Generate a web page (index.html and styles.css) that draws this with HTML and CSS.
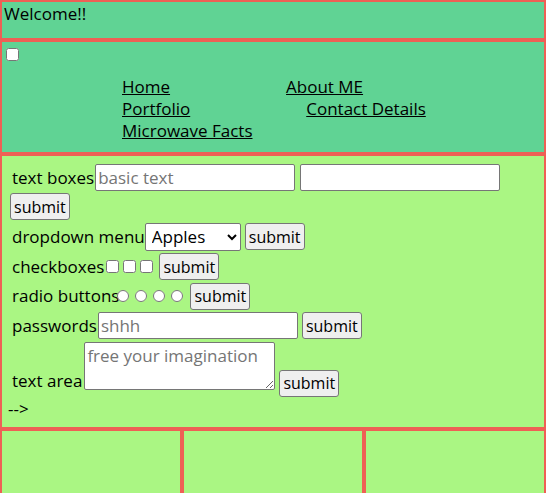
FILE: index.html
```html
<!DOCTYPE html>
<html lang="en">
<head>
<meta charset="utf-8">
<title>Welcome</title>
<link rel="stylesheet" href="styles.css">
</head>
<body>
<div class="page">
  <header class="header">Welcome!!</header>
  <nav class="nav">
    <input type="checkbox" class="menu-toggle">
    <ul class="links">
      <li><a href="#">Home</a></li>
      <li><a href="#">About ME</a></li>
      <li><a href="#">Portfolio</a></li>
      <li><a href="#">Contact Details</a></li>
      <li><a href="#">Microwave Facts</a></li>
    </ul>
  </nav>
  <main class="main">
    <form class="form">
      <div class="row row-wrap">
        <label class="lbl lbl-tight">text boxes</label>
        <input type="text" class="field" placeholder="basic text">
        <input type="text" class="field">
        <button type="button" class="btn">submit</button>
      </div>
      <div class="row">
        <label class="lbl lbl-select">dropdown menu</label>
        <select class="select"><option>Apples</option><option>Oranges</option></select>
        <button type="button" class="btn">submit</button>
      </div>
      <div class="row">
        <label class="lbl lbl-none">checkboxes</label>
        <span class="choices choices-check">
          <input type="checkbox"><input type="checkbox"><input type="checkbox">
        </span>
        <button type="button" class="btn">submit</button>
      </div>
      <div class="row">
        <label class="lbl lbl-none">radio buttons</label>
        <span class="choices choices-radio">
          <input type="radio" name="r"><input type="radio" name="r"><input type="radio" name="r"><input type="radio" name="r">
        </span>
        <button type="button" class="btn">submit</button>
      </div>
      <div class="row">
        <label class="lbl lbl-tight">passwords</label>
        <input type="password" class="field" placeholder="shhh">
        <button type="button" class="btn">submit</button>
      </div>
      <div class="row row-area">
        <label class="lbl lbl-area">text area</label>
        <textarea class="area" placeholder="free your imagination"></textarea>
        <button type="button" class="btn btn-area">submit</button>
      </div>
    </form>
    <div class="stray">--&gt;</div>
  </main>
  <footer class="footer">
    <div class="cell"></div>
    <div class="cell"></div>
    <div class="cell"></div>
  </footer>
</div>
</body>
</html>
```

FILE: styles.css
```css
* { box-sizing: border-box; }

html, body {
  margin: 0;
  padding: 0;
}

body {
  font-family: "Open Sans", "DejaVu Sans", sans-serif;
  font-size: 17px;
  line-height: 22px;
  color: #000;
  background: #fff;
}

.page {
  display: grid;
  grid-template-columns: repeat(3, 1fr);
  grid-template-rows: 40px 114px 275px 120px;
}

.header, .nav, .main {
  grid-column: 1 / -1;
}

.header, .nav, .main, .cell {
  border: 2px solid #ee6055;
}

.header {
  background: #60d394;
  padding: 1px 2px;
}

.nav {
  background: #60d394;
  padding-top: 3px;
}

.menu-toggle {
  display: block;
  margin: 3px 3px 3px 4px;
  width: 13px;
  height: 13px;
}

.links {
  list-style: none;
  margin: 15px 0 0 0;
  padding: 0 0 0 120px;
  width: 500px;
  display: flex;
  flex-wrap: wrap;
  column-gap: 116px;
}

.links a {
  color: #000;
  text-decoration: underline;
}

.main {
  background: #aaf683;
  padding: 8px 6px 0 6px;
}

.form {
  display: flex;
  flex-direction: column;
  gap: 2.5px;
  padding-left: 2px;
}

.row {
  display: flex;
  align-items: center;
  column-gap: 4px;
}

.row-wrap {
  flex-wrap: wrap;
  column-gap: 5px;
  row-gap: 2px;
}

.lbl {
  white-space: nowrap;
  padding-left: 2px;
}

.lbl-tight { margin-right: -3px; }
.row-wrap .lbl-tight { margin-right: -4px; }
.lbl-select { margin-right: -4px; }
.lbl-none { margin-right: -4px; }

.field {
  font: inherit;
  width: 200px;
  height: 27px;
  padding: 1px 2px;
  border: 1px solid #767676;
  border-radius: 2px;
  background: #fff;
}

.field::placeholder,
.area::placeholder {
  color: #757575;
}

.select {
  font: inherit;
  width: 96px;
  height: 28px;
  padding: 0 0 0 2px;
  border: 1px solid #767676;
  border-radius: 2px;
  background: #fff;
  color: #000;
}

.btn {
  font: inherit;
  font-size: 16px;
  height: 27px;
  padding: 0 3px;
  border: 1px solid #767676;
  border-radius: 3px;
  background: #efefef;
  color: #000;
}

.choices {
  display: flex;
  align-items: center;
}

.choices input {
  margin: 0;
  width: 13px;
  height: 13px;
}

.choices-check {
  gap: 4px;
  margin-left: 2px;
  margin-right: 2px;
}

.choices-radio {
  gap: 6px;
  margin-left: -2px;
  margin-right: 3px;
}

.choices-radio input {
  width: 12px;
  height: 12px;
}

.row-area {
  align-items: flex-end;
}

.lbl-area {
  margin-right: -2px;
  margin-bottom: 5px;
}

.area {
  font: inherit;
  width: 191px;
  height: 48px;
  padding: 2px;
  margin-bottom: 7px;
  border: 1px solid #767676;
  border-radius: 2px;
  background: #fff;
  resize: both;
}

.stray {
  margin-top: 1px;
}

.footer {
  grid-column: 1 / -1;
  display: grid;
  grid-template-columns: repeat(3, 1fr);
}

.cell {
  background: #aaf683;
}
```
